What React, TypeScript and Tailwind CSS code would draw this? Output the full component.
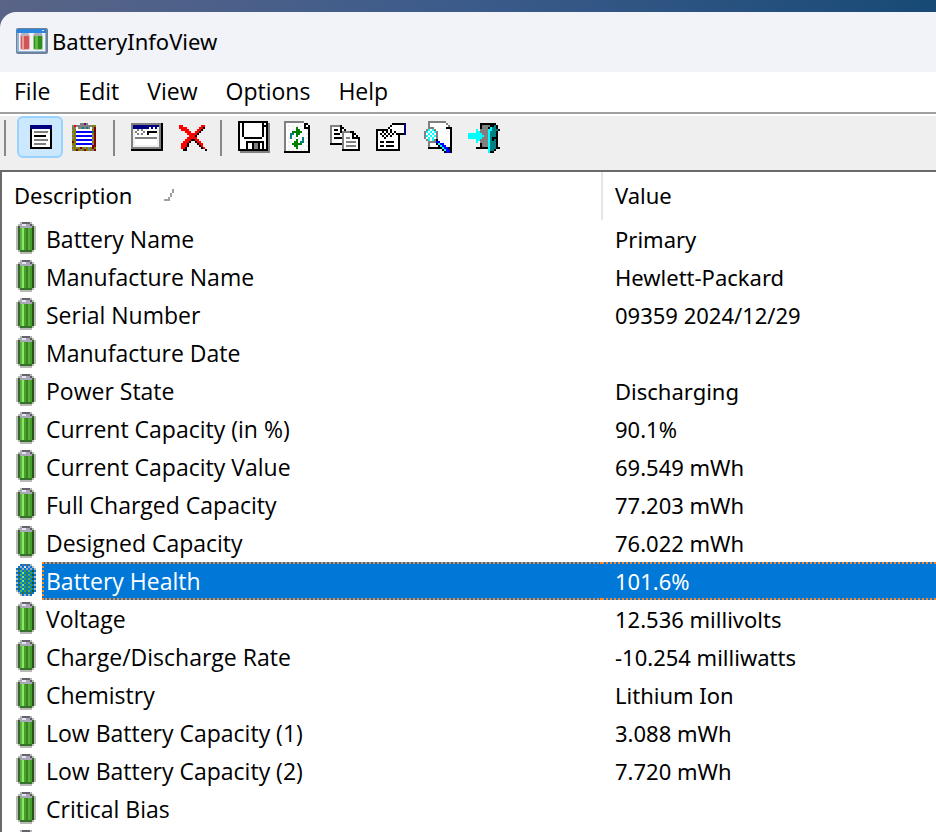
import { Fragment, memo } from "react";
import { clsx } from "clsx";

// Palette shared by the 16x16 toolbar bitmaps
const PALETTE: Record<string, string> = {
  k: "#000000",
  w: "#ffffff",
  l: "#efefef",
  g: "#808080",
  n: "#000080",
  b: "#0000ff",
  r: "#ff0000",
  m: "#800000",
  o: "#808000",
  p: "#800080",
  e: "#008000",
  t: "#008080",
  c: "#00ffff",
};

type Bitmap = string[];

const reportIcon: Bitmap = [
  "",
  "",
  "...nnnnnnnnnnn",
  "...nnnnnnnnnnn",
  "...kwwwwwwwwwk",
  "...kwgggggggwk",
  "...kwwwwwwwwwk",
  "...kwkkkkkkwwk",
  "...kwwwwwwwwwk",
  "...kwgggggggwk",
  "...kwwwwwwwwwk",
  "...kwggggggwwk",
  "...kwwwwwwwwwk",
  "...kkkkkkkkkkk",
];

const clipboardIcon: Bitmap = [
  "",
  ".....ggpg....",
  ".grggggggggoo",
  ".ogwggtgtgwgm",
  ".gowwwwwwwwom",
  ".oobbbbbbbbtm",
  ".gowwwwwwwwom",
  ".oobbbbbbbbgm",
  ".gowwwwwwwwom",
  ".oobbbbbbbbgm",
  ".mowwwwwwwwom",
  ".oobbbbbbbbgm",
  ".gowwwwwwwwmm",
  ".oogomogogomo",
  ".gomogomogogm",
];

const windowIcon: Bitmap = [
  "",
  "gggggggggggggggk",
  "gnnnnnnnnnnnnngk",
  "gnnnnnnnnwnwnwgk",
  "glwglgwwwwwwwlgk",
  "glgwwwgwkkkkklgk",
  "glwglgwwkwwwwlgk",
  "glwwwwwwwwwwwlgk",
  "glggggggggggglgk",
  "glwwwwwwwwwwwlgk",
  "glwwwwwwwwwwwlgk",
  "glwwwwwwwwwwwlgk",
  "glllllllllllllgk",
  "gggggggggggggggk",
  "kkkkkkkkkkkkkkkk",
];

const deleteIcon: Bitmap = [
  "",
  "",
  ".rr.........rr",
  ".rrrr......rrk",
  "..rrrr....rrk",
  "....rrr..rrk",
  ".....rrrrrk",
  "......rrrk",
  ".....rrrrr",
  "....rrrkkrr",
  "...rrrk..krr",
  "..rrrk....krr",
  "..rrrk.....kr",
  "..rrk.......kr",
  "...kk.........k",
];

const saveIcon: Bitmap = [
  "kkkkkkkkkkkkkkk",
  "kwkwwwwwwwwwkwkg",
  "kwkwwwwwwwwwkkkg",
  "kwkwwwwwwwwwkwkg",
  "kwkwwwwwwwwwkwkg",
  "kwkwwwwwwwwwkwkg",
  "kwkwwwwwwwwwkwkg",
  "kwkwwwwwwwwwkwkg",
  "kwwkkkkkkkkkwwkg",
  "kwwwwwwwwwwwwwkg",
  "kwwwkkkkkkkkkwkg",
  "kwwwkwwkggkwkwkg",
  "kwwwkwwkggkwkwkg",
  "kwwwkwwkggkwkwkg",
  "kkkkkkkkkkkkkkkg",
  ".ggggggggggggggg",
];

const refreshIcon: Bitmap = [
  "gggggggggg",
  "gwwwwwwwwwkk",
  "gwlwlwlwlwkwk",
  "gwwwwwewwwkkk",
  "gwlwlweewlwlk",
  "gwwweeeeewwwk",
  "gwwttweewlwlk",
  "gwwtwwewwwwwk",
  "gwltwlwlwtwlk",
  "gwwwwwewwtwwk",
  "gwlwweewttwlk",
  "gwwweeeeewwwk",
  "gwlwweewwlwlk",
  "gwwwwwewwwwwk",
  "gwlwlwlwlwlwk",
  "kkkkkkkkkkkkk",
];

const copyIcon: Bitmap = [
  "",
  "",
  "gggggk",
  "gwwwwkk",
  "gwkkwkwk",
  "gwwwwkggggkk",
  "gwkkkwgwwwwkk",
  "gwwwwwgwwwwkwk",
  "gwkkkkgwggwkkkk",
  "gwwwwwgwwwwwwwk",
  "gwwwwwgwgggggwk",
  "kkkkkkgwwwwwwwk",
  "......gwgggggwk",
  "......gwwwwwwwk",
  "......kkkkkkkkk",
];

const propertiesIcon: Bitmap = [
  "",
  "........kkkkkkn",
  ".......kwwwwwwn",
  "......kwwwwwwwn",
  "kkkkkkwkwwwwwwn",
  "kwwkwkwkwkwwwwn",
  "kwkwkwkwkwkkkkn",
  "kwwkwkwkwwwk",
  "kwwwkwwwwwwk",
  "kwwwwwwwwwwk",
  "kwkkwkkkkwwk",
  "kwwwwwwwwwwk",
  "kwkkwkkkkwwk",
  "kwwwwwwwwwwk",
  "kkkkkkkkkkkk",
];

const findIcon: Bitmap = [
  "...ggggggggg",
  "...gwwwwwwwwg",
  "...gwwwwwwwwwg",
  "...gggwwwwwwkkk",
  "..gcwcgwwwwwwwk",
  ".gcwcwcgwwwwwwk",
  ".gwcwcwgwwwwwwk",
  ".gcwcwcgwwwwwwk",
  ".gwcwcwgwwwwwwk",
  "..gcwcgkwwwwwwk",
  "...ggggbbwwwwwk",
  "...gwwwkcbbwwwk",
  "...gwwwwkcbbwwk",
  "...kkkkkkkcbbkk",
  "..........kcbbk",
  "...........kbbk",
];

const exitIcon: Bitmap = [
  "",
  "......kkkkkkkk",
  "......kggggkktk",
  "......kgggkcttk",
  "....c.ggggcctttk",
  "....ccggggctttk",
  "cccccccgggctttk",
  "ccccccccggctttk",
  "cccccccgggctkkk",
  "....ccggggctktk",
  "....c.ggggctttk",
  "......kgggctttk",
  "......kgggctttk",
  "....kkkkkkctttkk",
  "..........cttk",
  "..........ckk",
];

const PixelIcon = ({ bitmap }: { bitmap: Bitmap }) => (
  <svg className="size-8" viewBox="0 0 16 16" shapeRendering="crispEdges" aria-hidden="true">
    {bitmap.map((row, y) =>
      [...row].map((c, x) =>
        c === "." ? null : (
          <rect key={`${x}-${y}`} x={x} y={y} width="1" height="1" fill={PALETTE[c]} />
        ),
      ),
    )}
  </svg>
);

const AppLogo = () => (
  <svg className="h-[27px] w-8 shrink-0" viewBox="0 0 32 27" aria-hidden="true">
    <rect x="0" y="0" width="32" height="26" rx="2" fill="#6f8299" />
    <rect x="1" y="1" width="29" height="23" rx="1" fill="#8fb4dc" />
    <rect x="1" y="1" width="29" height="4" fill="#2a86de" />
    <rect x="26" y="2" width="2" height="1" fill="#d8e8fa" />
    <rect x="3" y="5" width="26" height="18" fill="#f1f3f5" />
    <rect x="4" y="6" width="10" height="16" rx="2" fill="#e6b4b6" />
    <rect x="5" y="8" width="8" height="13" rx="1" fill="#d05557" />
    <rect x="6" y="8" width="2" height="13" fill="#ea9c9c" />
    <rect x="5" y="5" width="8" height="3" rx="1" fill="#b9b3bd" />
    <rect x="17" y="6" width="10" height="16" rx="2" fill="#a3c99a" />
    <rect x="18" y="8" width="8" height="13" rx="1" fill="#2f8c1e" />
    <rect x="19" y="8" width="3" height="13" fill="#5dbb43" />
    <rect x="18" y="5" width="8" height="3" rx="1" fill="#a9aab8" />
  </svg>
);

const BatteryIcon = ({ selected = false }: { selected?: boolean }) => (
  <svg
    className="h-8 w-5 shrink-0"
    viewBox="0 0 10 16"
    shapeRendering="crispEdges"
    aria-hidden="true"
  >
    <defs>
      <pattern id="dither" width="2" height="2" patternUnits="userSpaceOnUse">
        <rect width="1" height="1" fill="#0078d7" />
        <rect x="1" y="1" width="1" height="1" fill="#0078d7" />
      </pattern>
    </defs>
    <path d="M2 0h6v1h1v1h1v12H9v1H8v1H2v-1H1v-1H0V2h1V1h1z" fill="#b9b9b5" />
    <path d="M1 2h8v12H8v1H2v-1H1z" fill="#35682a" />
    <path d="M2 1h6v2H2z" fill="#a9a6b8" />
    <path d="M3 0h4v1H3z" fill="#66636f" />
    <path d="M3 1h2v1H3z" fill="#e6e4f0" />
    <path d="M7 1h1v1H7z" fill="#5c5868" />
    <path d="M2 3h6v11H2z" fill="#47a02c" />
    <path d="M2 3h1v11H2z" fill="#56b53a" />
    <path d="M3 3h1v11H3z" fill="#8fe56c" />
    <path d="M5 3h1v11H5z" fill="#38851f" />
    <path d="M6 3h1v11H6z" fill="#58b03a" />
    <path d="M8 3h1v11H8z" fill="#265318" />
    <path d="M2 14h6v1H2z" fill="#37702a" />
    {selected && (
      <path d="M2 0h6v1h1v1h1v12H9v1H8v1H2v-1H1v-1H0V2h1V1h1z" fill="url(#dither)" />
    )}
  </svg>
);

const MENUS = ["File", "Edit", "View", "Options", "Help"];

const TOOLBAR = [
  [
    { label: "Report view", bitmap: reportIcon, active: true },
    { label: "Battery log", bitmap: clipboardIcon },
  ],
  [
    { label: "Window", bitmap: windowIcon },
    { label: "Delete", bitmap: deleteIcon },
  ],
  [
    { label: "Save", bitmap: saveIcon },
    { label: "Refresh", bitmap: refreshIcon },
    { label: "Copy", bitmap: copyIcon },
    { label: "Properties", bitmap: propertiesIcon },
    { label: "Find", bitmap: findIcon },
    { label: "Exit", bitmap: exitIcon },
  ],
];

const ROWS = [
  { name: "Battery Name", value: "Primary" },
  { name: "Manufacture Name", value: "Hewlett-Packard" },
  { name: "Serial Number", value: "09359 2024/12/29" },
  { name: "Manufacture Date", value: "" },
  { name: "Power State", value: "Discharging" },
  { name: "Current Capacity (in %)", value: "90.1%" },
  { name: "Current Capacity Value", value: "69.549 mWh" },
  { name: "Full Charged Capacity", value: "77.203 mWh" },
  { name: "Designed Capacity", value: "76.022 mWh" },
  { name: "Battery Health", value: "101.6%", selected: true },
  { name: "Voltage", value: "12.536 millivolts" },
  { name: "Charge/Discharge Rate", value: "-10.254 milliwatts" },
  { name: "Chemistry", value: "Lithium Ion" },
  { name: "Low Battery Capacity (1)", value: "3.088 mWh" },
  { name: "Low Battery Capacity (2)", value: "7.720 mWh" },
  { name: "Critical Bias", value: "" },
  { name: "", value: "" },
];

const TitleBar = memo(() => (
  <header className="flex h-[60px] items-center gap-1 rounded-tl-2xl bg-[#f1f3f9] pb-0.5 pl-4">
    <AppLogo />
    <h1>BatteryInfoView</h1>
  </header>
));

TitleBar.displayName = "TitleBar";

const MenuBar = memo(() => (
  <nav className="flex h-10 items-center bg-white pb-0.5 font-['Open_Sans','Noto_Sans',sans-serif] text-[23px]">
    {MENUS.map((menu) => (
      <button key={menu} type="button" className="px-3.5">
        {menu}
      </button>
    ))}
  </nav>
));

MenuBar.displayName = "MenuBar";

const Toolbar = memo(() => (
  <div
    role="toolbar"
    className="flex h-[58px] items-start border-t-2 border-[#a0a0a0] bg-[#efefef] shadow-[inset_0_2px_0_#ffffff]"
  >
    {TOOLBAR.map((group, i) => (
      <Fragment key={i}>
        <span
          className={clsx("mt-1.5 ml-1 h-9 w-0.5 bg-[#888888]", i === 0 ? "mr-[11px]" : "mr-[9px]")}
        />
        {group.map((tool) => (
          <button
            key={tool.label}
            type="button"
            aria-label={tool.label}
            className={clsx(
              "mt-0.5 flex h-[42px] w-[46px] items-center justify-center rounded-md border-2",
              tool.active ? "border-[#99d1ff] bg-[#cce8ff]" : "border-transparent",
            )}
          >
            <PixelIcon bitmap={tool.bitmap} />
          </button>
        ))}
      </Fragment>
    ))}
  </div>
));

Toolbar.displayName = "Toolbar";

const BatteryTable = memo(() => (
  <table className="w-full table-fixed border-collapse text-left">
    <thead>
      <tr className="h-12">
        <th className="w-[600px] border-r-2 border-[#e5e5e5] p-0 pb-0.5 pl-3 font-normal">
          <span className="flex items-center gap-8">
            Description
            <svg className="h-3 w-2.5" viewBox="0 0 5 6" shapeRendering="crispEdges">
              <path d="M4 0h1v2H4zM3 2h1v2H3zM2 4h1v1H2zM0 5h3v1H0z" fill="#a0a0a0" />
            </svg>
          </span>
        </th>
        <th className="p-0 pb-0.5 pl-3 font-normal">Value</th>
      </tr>
    </thead>
    <tbody>
      {ROWS.map((row) => (
        <tr key={row.name}>
          <td className="p-0 pl-3.5 font-['Open_Sans','Noto_Sans',sans-serif] text-[23px]">
            <div className="flex items-start gap-1.5">
              <span className="pt-0.5">
                <BatteryIcon selected={row.selected} />
              </span>
              <span
                className={clsx(
                  "flex h-[38px] flex-1 items-center border-y-2 border-l-2 pl-0.5",
                  row.selected
                    ? "border-dotted border-[#ff8728] bg-[#0078d7] text-white"
                    : "border-transparent",
                )}
              >
                {row.name}
              </span>
            </div>
          </td>
          <td className="p-0">
            <div
              className={clsx(
                "flex h-[38px] items-center border-y-2 pl-[13px]",
                row.selected
                  ? "border-dotted border-[#ff8728] bg-[#0078d7] text-white"
                  : "border-transparent",
              )}
            >
              {row.value}
            </div>
          </td>
        </tr>
      ))}
    </tbody>
  </table>
));

BatteryTable.displayName = "BatteryTable";

const App = memo(() => {
  return (
    <div className="flex h-screen flex-col overflow-hidden bg-linear-to-r from-[#596487] via-[#3b5b8b] to-[#174a76] pt-3 font-['Noto_Sans','Open_Sans',sans-serif] text-[22px] leading-7 text-black">
      <TitleBar />
      <MenuBar />
      <Toolbar />
      <main className="min-h-0 flex-1 overflow-hidden border-t-2 border-l-2 border-[#696969] bg-white">
        <BatteryTable />
      </main>
    </div>
  );
});

App.displayName = "App";

export default App;
